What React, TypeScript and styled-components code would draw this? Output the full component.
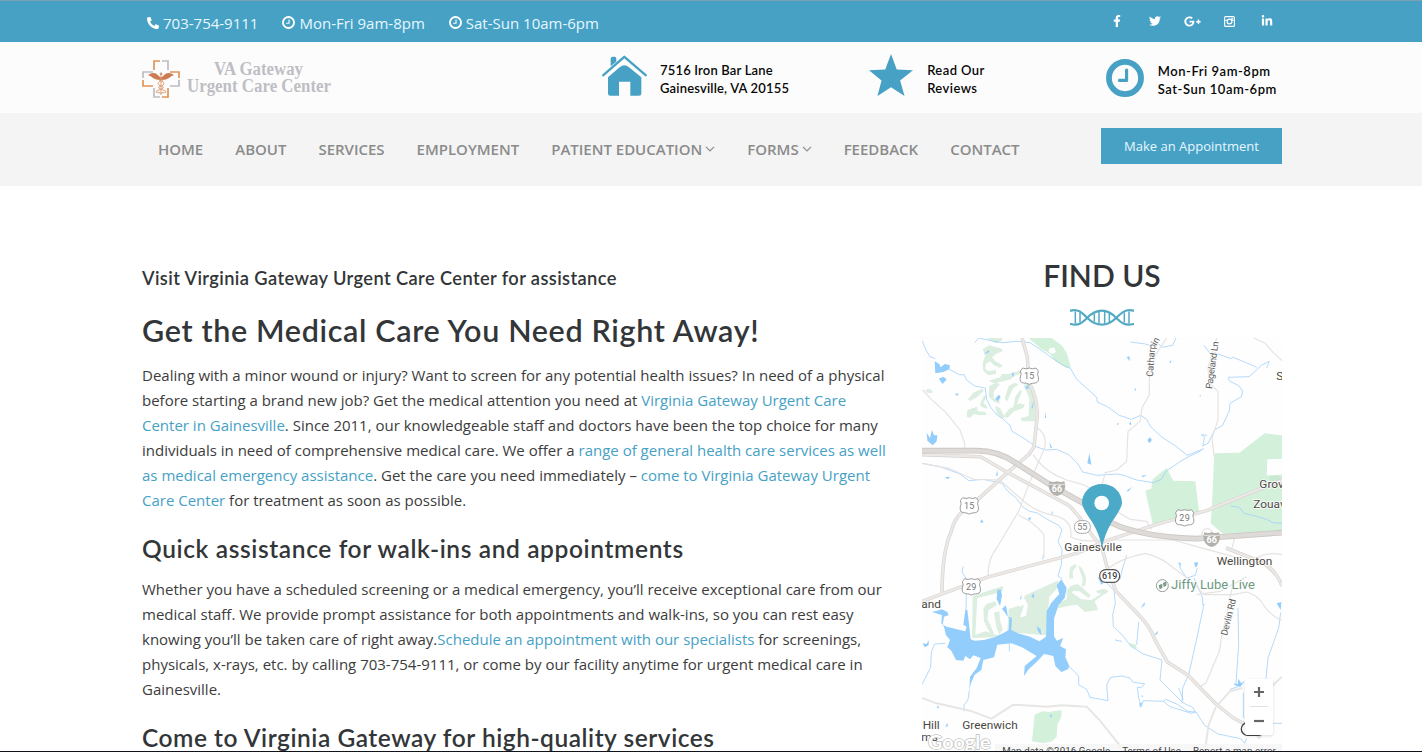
import React from "react";
import styled, { createGlobalStyle } from "styled-components";
import { FaFacebookF, FaTwitter, FaGooglePlusG, FaLinkedinIn, FaPhoneAlt } from "react-icons/fa";

const BLUE = "#46a1c5";
const LATO = `Lato, "Open Sans", sans-serif`;

const GlobalStyle = createGlobalStyle`
  * { box-sizing: border-box; }
  body { margin: 0; background: #fff; font-family: "Open Sans", sans-serif; overflow: hidden; }
  h1, h2, h3, h4, p { margin: 0; }
`;

const Page = styled.div`
  height: 752px;
  overflow: hidden;
  border-bottom: 1px solid #10131a;
`;

const Container = styled.div`
  width: 1140px;
  margin-left: 142px;
  display: flex;
`;

const TopBar = styled.div`
  height: 42px;
  border-top: 1px solid #7ba2b2;
  background: ${BLUE};
  color: #fff;
`;

const TopInfo = styled.div`
  display: flex;
  flex: 1;
  padding-left: 5px;
  gap: 24px;
`;

const TopItem = styled.span`
  display: flex;
  align-items: center;
  gap: 4px;
  height: 43px;
  font-size: 15px;
  color: #e6f8ff;
  white-space: nowrap;
  svg { color: #fff; }
`;

const Social = styled.div`
  display: flex;
  height: 40px;
  align-items: center;
  font-size: 12px;
  margin-right: -4px;
`;

const SocialLink = styled.a`
  width: 37.5px;
  display: flex;
  justify-content: center;
`;

const Brand = styled.div`
  height: 71px;
  background: #fcfcfc;
`;

const Logo = styled.svg`
  width: 192px;
  height: 42px;
  margin-top: 16px;
  flex: none;
  overflow: visible;
`;

const Fact = styled.div<{ $gap: number; $left: number }>`
  display: flex;
  gap: ${(p) => p.$gap}px;
  margin-left: ${(p) => p.$left}px;
  color: #080808;
  svg { flex: none; }
`;

const FactIcon = styled.div<{ $top: number }>`
  padding-top: ${(p) => p.$top}px;
  color: ${BLUE};
  height: 60px;
`;

const FactText = styled.div<{ $spacing: number; $top?: number }>`
  padding-top: ${(p) => p.$top ?? 19}px;
  font: 600 13px/18px ${LATO};
  letter-spacing: ${(p) => p.$spacing}px;
  white-space: nowrap;
`;

const NavBar = styled.div`
  height: 73px;
  background: #f4f4f4;
`;

const Menu = styled.nav`
  display: flex;
  flex: 1;
  padding-left: 16px;
  gap: 32px;
  height: 71px;
  align-items: center;
`;

const MenuItem = styled.a`
  display: flex;
  align-items: center;
  gap: 3px;
  color: #8b8b8b;
  font-weight: 600;
  font-size: 15px;
  line-height: 20px;
  letter-spacing: -0.01px;
  white-space: nowrap;
`;

const Appointment = styled.a`
  width: 181px;
  height: 36px;
  margin-top: 15px;
  background: ${BLUE};
  color: #e6f8ff;
  font-size: 13px;
  line-height: 37px;
  text-align: center;
`;

const Article = styled.main`
  width: 750px;
  padding-top: 78px;
  margin-right: 30px;
  flex: none;
`;

const Heading = styled.h3<{ $size: number; $line: number; $spacing: number; $gap?: number }>`
  margin-top: ${(p) => p.$gap ?? 0}px;
  font: 600 ${(p) => p.$size}px/${(p) => p.$line}px ${LATO};
  letter-spacing: ${(p) => p.$spacing}px;
  color: #333638;
  white-space: nowrap;
`;

const Paragraph = styled.p`
  font-size: 15px;
  line-height: 25px;
  color: #3c3c3c;
  white-space: nowrap;
`;

const Link = styled.a`
  color: ${BLUE};
`;

const Aside = styled.aside`
  width: 360px;
  flex: none;
  display: flex;
  flex-direction: column;
  align-items: center;
  padding-top: 71px;
`;

const HelixSlot = styled.div`
  height: 45px;
  padding-top: 16px;
`;

const MapFrame = styled.div`
  position: relative;
  width: 360px;
  height: 414px;
  overflow: hidden;
`;

const ZoomControls = styled.div`
  position: absolute;
  right: 9px;
  top: 341px;
  width: 28px;
  height: 56px;
  padding: 7px 0 8px;
  background: #fff;
  border-radius: 2px;
  box-shadow: 0 1px 3px rgba(0, 0, 0, 0.14);
  display: flex;
  flex-direction: column;
  align-items: center;
  justify-content: space-between;
`;

const ZoomRule = styled.i`
  width: 18px;
  height: 1px;
  background: #e2e2e2;
`;

const Attribution = styled.div`
  position: absolute;
  right: 0;
  top: 406px;
  height: 14px;
  padding: 0 6px 0 7px;
  display: flex;
  gap: 12px;
  background: rgba(245, 245, 245, 0.8);
  color: #444;
  font: 9.7px/14px Roboto, sans-serif;
  letter-spacing: 0.12px;
  white-space: nowrap;
`;

const ClockOutline = ({ size, weight = 220 }: { size: number; weight?: number }) => (
  <svg width={size} height={size} viewBox="0 0 1536 1536" fill="none" stroke="currentColor">
    <circle cx="768" cy="768" r={766 - weight / 2} strokeWidth={weight} />
    <path d="M832 448v416H544" strokeWidth="128" strokeLinejoin="round" strokeLinecap="round" />
  </svg>
);

const InstagramIcon = () => (
  <svg width="11" height="11" viewBox="0 0 22 22" fill="none" stroke="currentColor">
    <rect x="1.2" y="1.2" width="19.6" height="19.6" rx="2" strokeWidth="2.2" />
    <circle cx="11" cy="11" r="4.8" strokeWidth="2.4" />
    <path d="M1 8.5h5M16 8.5h5" strokeWidth="1.8" />
    <path d="M15 4.5h3v2h-3z" fill="currentColor" />
  </svg>
);

const House = () => (
  <svg width="45" height="42" viewBox="0 0 135 125" fill={BLUE}>
    <path d="M26 33V11q0-6 6-6h6q5 0 5 6v9z" />
    <path d="M4 60 67 5l64 55" fill="none" stroke={BLUE} strokeWidth="7" strokeLinecap="round" strokeLinejoin="round" />
    <path d="M18 66 53 36q14-11 28 0l37 30v49q0 7-7 7H85V80H51v42H25q-7 0-7-7z" />
  </svg>
);

const Star = () => (
  <svg width="44" height="42" viewBox="0 0 130 124" fill={BLUE}>
    <path d="M65 0 82 46l48 2-38 30 13 46-40-26-40 26 12-46L0 48l48-2z" />
  </svg>
);

const Chevron = () => (
  <svg width="10" height="6" viewBox="0 0 10 6" fill="none" stroke="#8b8b8b" strokeWidth="1.2">
    <path d="M1 .8 5 4.8 9 .8" />
  </svg>
);

const Helix = () => (
  <svg width="64" height="17" viewBox="0 0 192 51" fill="none" stroke="#52a9c3" strokeLinecap="round">
    <path d="M2 5C26-1 38 13 52 27S82 47 96 47s28-6 42-20 28-28 52-22" strokeWidth="6.5" />
    <path d="M2 45c24 7 36-5 50-19S82 5 96 5s28 7 42 21 28 26 52 19" strokeWidth="6.5" />
    <path d="M16 9v33M30 13v25M73 16v20M87 10v32M104 10v32M118 14v24M163 13v25M177 9v33" strokeWidth="4.5" />
  </svg>
);

const LogoMark = () => (
  <Logo viewBox="0 0 192 42">
    <g fill="none" strokeWidth="1.7">
      <path stroke="#e09558" d="M18 3H12v9M28 14h9v6M1 22v6h10M26 30v9h-6" />
      <path stroke="#bcbcc2" d="M20 3h6v9M11 14H1v6M37 22v6h-9M12 30v9h6" />
    </g>
    <path fill="#cf7950" d="M18 19 14 15.500Q10 14 6 17q3 1 5 3 3 2 7 2h2q4 0 7-2 2-2 5-3-4-3-8-1.500L20 19z" />
    <circle cx="19" cy="16" r="1.400" fill="#cf9a80" />
    <path fill="none" stroke="#dfa27b" strokeWidth="1" d="M19 17v20M17 22q5 1.500 5 3.500t-4 3 3 3.500-2 3M21 22q-5 1.500-5 3.500t4 3-3 3.500 2 3" />
    <g fill="#bebec4" fontFamily="Liberation Serif, serif" fontWeight="700" fontSize="18">
      <text x="72" y="16.500" textLength="89" lengthAdjust="spacingAndGlyphs">VA Gateway</text>
      <text x="45" y="34" textLength="144" lengthAdjust="spacingAndGlyphs">Urgent Care Center</text>
    </g>
  </Logo>
);

type Shield = { x: number; y: number; label: string };

const UsShield = ({ x, y, label }: Shield) => (
  <g transform={`translate(${x} ${y})`}>
    <path d="M-20-24q10 5 20 0 10 5 20 0l7 9q-5 10 0 18 3 16-9 18-10 0-18 4-8-4-18-4-12-2-9-18 5-8 0-18z" fill="#fff" stroke="#8a8a8a" strokeWidth="2.5" />
    <text y="9" textAnchor="middle" fontSize="27" letterSpacing="1" fill="#777">{label}</text>
  </g>
);

const InterstateShield = ({ x, y, label }: Shield) => (
  <g transform={`translate(${x} ${y})`}>
    <path d="M-22-20q11 4 22 0 11 4 22 0 4 10 2 20-4 20-24 24-20-4-24-24-2-10 2-20z" fill="#b3b1ab" />
    <path d="M-24-11h48" stroke="#fff" strokeWidth="2" />
    <text y="12" textAnchor="middle" fontSize="27" fontWeight="700" fill="#fff">{label}</text>
  </g>
);

const OvalShield = ({ x, y, label, dark }: Shield & { dark?: boolean }) => (
  <g transform={`translate(${x} ${y})`}>
    <rect x={dark ? -30 : -24} y="-19" width={dark ? 60 : 48} height="38" rx="18" fill="#fff" stroke={dark ? "#555" : "#999"} strokeWidth={dark ? 3.5 : 2.5} />
    <text y="9" textAnchor="middle" fontSize="27" fontWeight={dark ? 500 : 400} fill={dark ? "#444" : "#808080"}>{label}</text>
  </g>
);

const Parks = () => (
  <g fill="#d3f0da">
    <path d="M326 0L395 0L425 22L440 45L453 88L440 90L405 68L390 48L360 30Z" />
    <path d="M387 32L402 28L408 42L398 48L386 42Z" fill="#fff" />
    <g fill="#dceee0">
      <path d="M200 0L246 0L246 8L228 16L212 8Z" />
      <path d="M16 156L28 152L38 160L36 166L20 164Z" />
      <path d="M188 34L208 22L246 32L248 40L232 46L216 58L226 70L248 82L240 90L220 80L210 70L198 78L196 92L204 100L228 96L228 108L204 112L190 98L188 76L196 52Z" />
      <path d="M206 128L240 118L246 108L266 108L280 104L292 100L306 98L306 106L286 112L272 124L250 130L222 136Z" />
      <path d="M208 144L228 134L240 138L222 160L220 180L236 186L240 196L224 192L206 176Z" />
      <path d="M144 184L160 164L186 152L192 158L172 176L150 190Z" />
      <path d="M192 172L200 176L190 196L202 204L200 212L184 206L180 198Z" />
      <path d="M142 216L170 206L174 220L196 222L200 230L180 232L162 228L150 240L140 236Z" />
      <path d="M254 182L266 144L284 134L296 140L280 150L270 170L262 190Z" />
      <path d="M280 206L286 176L300 156L306 160L296 184L288 212Z" />
      <path d="M310 140L330 136L334 160L346 190L346 250L306 250L302 240L326 234L328 180Z" />
      <path d="M250 236L266 214L300 196L314 200L310 210L282 220L262 240Z" />
      <path d="M226 204L240 210L254 238L246 242L230 226Z" />
    </g>
    <path d="M883 346L958 344L1034 286L1086 292L1086 362L1042 364L1040 412L1086 410L1086 578L910 588L872 556L876 500Z" />
    <path d="M1048 416L1074 412L1086 420L1086 450L1052 440Z" fill="#c8ead0" />
    <path d="M676 458L694 452L698 424L740 390L760 428L826 430L838 528L698 558Z" />
    <g fill="#dceee0">
      <path d="M158 774L248 744L250 756L236 764L172 780L166 890L196 880L232 892L262 884L266 812L290 806L316 772L412 728L420 742L388 776L378 892L330 888L290 884L240 898L156 900Z" />
      <path d="M190 812L200 798L226 790L230 802L206 816L202 844L216 872L224 892L210 886L192 850ZM222 824L238 820L240 846L248 874L238 890L230 870Z" />
      <path d="M448 710L450 688L466 678L470 684L458 700L460 720L448 722ZM474 682L486 690L498 718L496 742L486 748L488 722Z" />
      <path d="M440 758L452 744L472 738L488 750L512 772L506 780L478 760L460 758L456 764L484 784L514 786L562 756L558 764L524 790L534 816L494 822L472 800L444 804L408 812L414 794L440 784Z" />
      <path d="M528 758L552 752L566 760L556 768L532 766Z" />
    </g>
    <path d="M284 780L296 806L312 802L300 838L318 834L324 800L312 780L298 772Z" fill="#fefefe" />
    <path d="M344 1130L368 1120L386 1122L424 1116L424 1136L412 1160L410 1196L396 1210L370 1216L336 1210Z" />
    <path d="M626 914L648 920L650 932L634 926Z" />
  </g>
);

const Water = () => (
  <g fill="#93cdfb">
    <path d="M44 70L58 78L62 88L74 78L90 82L88 94L70 102L46 106ZM56 122L70 116L80 124L68 138ZM104 168L116 166L112 174ZM620 58L628 54L630 70ZM226 182L236 170L242 176L234 190ZM274 108L280 102L282 118ZM643 154L647 150L648 160ZM748 72L754 66L752 76ZM190 50L206 36L208 42ZM314 150L328 138L324 154ZM334 210L342 186L338 212ZM838 172L842 170L842 176ZM374 240L378 222L378 240Z" />
    <path d="M20 284L30 300L36 276L42 292L52 292L50 310L38 322L22 308ZM502 376L508 346L514 380ZM682 306L690 298L696 306L688 316ZM74 418L90 416L84 424ZM388 312L396 328L392 332ZM627 258L632 250L634 262ZM664 414L680 410L670 418ZM618 460L636 446L626 460ZM228 414L231 398L234 412ZM180 552L186 544L190 556ZM324 540L334 538L328 548ZM775 674L782 674L782 690ZM822 674L834 672L832 684L826 688ZM394 526L398 518L398 530ZM590 258L596 254L594 262Z" />
    <path d="M36 822L52 818L66 814L82 822L86 832L72 836L68 860L80 866L136 880L140 866L130 860L136 816L142 816L148 866L152 904L164 908L192 906L224 898L252 884L266 876L268 842L246 812L258 802L264 836L276 840L274 876L294 886L330 896L358 910L378 896L380 820L394 794L418 768L410 742L424 724L440 750L434 780L416 800L402 842L402 894L410 908L430 900L420 924L438 934L436 958L448 984L444 994L424 1002L406 984L400 954L372 948L352 970L326 994L312 1014L314 984L350 954L306 928L274 916L232 920L222 958L190 966L184 996L164 1010L152 1038L148 1060L150 1016L170 990L182 960L160 952L150 964L136 954L130 968L108 966L94 938L82 928L90 906L78 892L72 866L64 856L66 832Z" />
    <path d="M232 756L242 754L246 772L240 804L230 784ZM350 864L362 874L364 892L354 880ZM8 916L20 918L26 906L26 922L14 928ZM300 784L304 768L304 784ZM334 776L342 764L342 780ZM662 810L674 792L674 802ZM702 892L714 878L712 888ZM1070 796L1084 792L1082 816ZM942 1036L954 1038L954 1022L964 1036L974 1028L962 1046L944 1042ZM76 1164L84 1154L82 1168ZM50 1108L56 1102L56 1112ZM388 1130L396 1130L394 1140ZM532 714L550 736L544 740ZM664 1072L670 1074L666 1078ZM658 1096L666 1094L660 1110Z" />
  </g>
);

const Streams = () => (
  <g fill="none" stroke="#9dcffa" strokeWidth="2.3" strokeLinejoin="round">
    <path d="M6 8L18 36L30 56L46 62M88 94L118 110L132 110L140 126L164 144L196 150L200 184L212 208L230 230L248 242L270 262L276 280L310 300L348 326L378 336L410 334L446 350L474 378L488 402L530 412L590 408L612 412L650 426L700 434L724 424L738 400L778 372L806 356L844 338M164 14L176 0M176 0L222 10L246 14L290 10L330 14L360 34L396 60L426 80L452 92L470 124L504 154L530 178L532 192L562 206L598 232L634 244L662 232L680 244L690 264L726 298L764 322L802 352L852 332" />
    <path d="M632 12L676 18L690 22L698 18L710 12L726 28L758 22L768 0M884 44L932 62L940 58L1002 84L1010 88M924 118L988 116L1024 82L1048 70L1040 90M924 120L930 130L958 144L968 160L964 176L930 196L928 218L908 262L884 276L864 316L848 324L854 298L844 290L862 292M852 22L868 44L884 48" />
    <path d="M6 376L60 386L120 408L146 428L190 424L228 432L246 436L262 458L286 478L310 508L328 520L350 524L382 544L416 562L426 576L414 610L426 634L424 680L414 714L426 722M130 686L126 702L140 724L138 816M370 650L368 664M620 652L608 690L600 724M778 686L800 720L826 712L832 690M822 720L848 780L848 800L852 798L828 912L806 1010L788 1050L786 1096M932 504L958 508L972 526L1006 534L1040 544L1058 554L1086 556" />
    <path d="M76 916L44 918L34 942L32 988L6 1040M148 1058L144 1084L132 1102L132 1120M446 984L476 1014L476 1040L500 1054L510 1078L564 1088L560 1040L572 1018L606 1014L630 1020L638 1032L674 1038L664 1048L652 1048L656 1080L664 1106L670 1088L730 1090L738 1084L770 1098L804 1120L826 1122L818 1108L796 1098L784 1090L720 1026L726 966L670 948L632 924L608 892L580 866L578 830L586 796L582 758L552 726M656 852L650 920M730 1090L750 1106L814 1126L828 1122L854 1162L894 1188L962 1202L974 1216L980 1200M954 810L956 920L948 1036M1082 824L1076 870L1044 960L1038 1022M960 1044L930 1054M776 1050L790 1086M970 1064L970 1140M1056 1156L1086 1156M585 906L606 910M268 910L268 940" />
  </g>
);

const thinRoads = [
  "M740 0L706 52L688 108L688 170L666 210L660 250L624 280L620 370L590 396L556 404L546 440",
  "M890 0L864 90L868 136L894 160L894 246L876 300L882 354",
  "M1000 0L1036 16L1060 44L1086 68",
  "M8 156L34 184L78 224L120 276L134 316V340",
  "M352 270Q382 288 374 330L330 430L296 520L230 630Q204 660 204 716",
  "M340 350Q370 400 440 426L490 440L520 456M590 520L630 544L680 550L694 574",
  "M296 532Q344 554 372 590V660",
  "M6 376L90 392L160 424L240 426L300 480Q340 520 400 532T452 596Q480 614 560 606L760 606L860 634L1030 680L1086 730",
  "M566 690Q606 660 676 646Q730 660 760 690L816 730L852 770L940 770L980 762Q1014 770 1034 806Q1054 834 1086 848",
  "M1004 664Q1040 640 1086 650M944 600L936 630M830 770L900 760L980 716",
  "M940 734L904 900L898 940L858 1034L838 1048",
];

const roads = [
  "M306 0L322 56L326 130Q352 180 352 230L342 326L326 350L262 404L150 506Q104 530 94 580Q66 640 66 770",
  "M6 350L182 356L264 404L446 502Q474 528 500 570L546 630L562 690L588 760L656 830Q690 864 706 908L742 972L804 1012L888 1098L940 1140L996 1170L1020 1200",
  "M6 790L200 718L470 646L560 608L720 556L860 518L1086 426",
  "M918 630L1030 674Q1066 694 1086 744",
];

const interstate = "M6 338H170Q234 338 286 374L390 440L490 496Q540 542 600 566Q690 598 830 602L1086 584";

const Roads = () => (
  <g fill="none" strokeLinejoin="round">
    <g stroke="#e5e3e2" strokeWidth="3.5">
      {thinRoads.map((d) => <path key={d} d={d} />)}
    </g>
    <g stroke="#e8e6e5" strokeWidth="6">
      <path d="M6 1080L50 1096L150 1118L214 1142L280 1100L380 1106L426 1102L500 1106L540 1148L602 1226M894 1100L930 1060L968 1050M888 1106L866 1160L856 1230M1086 1016L1050 1050" />
    </g>
    <g stroke="#d6d2d0" strokeWidth="10.500">{roads.map((d) => <path key={d} d={d} />)}</g>
    <g stroke="#ebe8e6" strokeWidth="7">{roads.map((d) => <path key={d} d={d} />)}</g>
    <path d={interstate} stroke="#cbc7c4" strokeWidth="17" />
    <path d={interstate} stroke="#dedad8" strokeWidth="12" />
    <circle cx="862" cy="588" r="16" stroke="#e0dddb" strokeWidth="3" />
  </g>
);

const AreaMap = () => (
  <svg width="360" height="414" viewBox="6 0 1080 1242" fontFamily="Roboto, sans-serif">
    <rect x="6" width="1080" height="1242" fill="#fefefe" />
    <Parks />
    <Streams />
    <Water />
    <Roads />
    <UsShield x={328} y={114} label="15" />
    <UsShield x={148} y={503} label="15" />
    <UsShield x={794} y={539} label="29" />
    <UsShield x={154} y={746} label="29" />
    <InterstateShield x={411} y={450} label="66" />
    <InterstateShield x={875} y={603} label="66" />
    <OvalShield x={487} y={567} label="55" />
    <OvalShield x={569} y={714} label="619" dark />
    <rect x="964" y="1154" width="70" height="38" rx="19" fill="#fff" stroke="#444" strokeWidth="4" />
    <g fontSize="28" fill="#5c5c5c" stroke="#fff" strokeWidth="4" paintOrder="stroke">
      <text transform="translate(698 117) rotate(-85)">Catharp</text>
      <text transform="translate(709 24) rotate(-62)">in R</text>
      <text transform="translate(876 154) rotate(-82)" textLength="144">Pageland Ln</text>
      <text transform="translate(921 894) rotate(-76)" textLength="112">Devlin Rd</text>
    </g>
    <g fontSize="35.500" fill="#4a4642" stroke="#fff" strokeWidth="4" paintOrder="stroke">
      <text x="433" y="640" textLength="172">Gainesville</text>
      <text x="890" y="682" textLength="167">Wellington</text>
      <text x="1018" y="450">Grove</text>
      <text x="1000" y="510">Zouave</text>
      <text x="1069" y="126">Sudley</text>
      <text x="4" y="810">and</text>
      <text x="8" y="1173">Hill</text>
      <text x="4" y="1208">ms</text>
      <text x="127" y="1173" textLength="166">Greenwich</text>
      <text x="753" y="754" fontSize="39" fill="#6b9980" textLength="252">Jiffy Lube Live</text>
    </g>
    <circle cx="727" cy="743" r="18" fill="#fff" stroke="#888" strokeWidth="2.5" />
    <path d="M716 742l11-5v13l-8 4zM729 735l10-5v13l-8 4z" fill="#789b86" />
    <path d="M546 630q-6-38-29-77-31-44-31-58c0-33 26-57 60-57s60 24 60 57q0 14-31 58-23 40-29 77z" fill="#4baac8" />
    <circle cx="545" cy="495" r="22" fill="#fff" />
    <text x="24" y="1234" fontSize="54" fontWeight="700" fill="#fff" stroke="#bdbdbd" strokeWidth="4" paintOrder="stroke" textLength="188" lengthAdjust="spacingAndGlyphs" fontFamily="Lato, sans-serif">Google</text>
  </svg>
);

export default function App() {
  return (
    <Page>
      <GlobalStyle />
      <TopBar>
        <Container>
          <TopInfo>
            <TopItem><FaPhoneAlt size={12} />703-754-9111</TopItem>
            <TopItem><ClockOutline size={13} />Mon-Fri 9am-8pm</TopItem>
            <TopItem><ClockOutline size={13} />Sat-Sun 10am-6pm</TopItem>
          </TopInfo>
          <Social>
            <SocialLink><FaFacebookF /></SocialLink>
            <SocialLink><FaTwitter /></SocialLink>
            <SocialLink><FaGooglePlusG size={17} /></SocialLink>
            <SocialLink><InstagramIcon /></SocialLink>
            <SocialLink><FaLinkedinIn /></SocialLink>
          </Social>
        </Container>
      </TopBar>
      <Brand>
        <Container>
          <LogoMark />
          <Fact $left={268} $gap={13}>
            <FactIcon $top={13}><House /></FactIcon>
            <FactText $spacing={0.17}>7516 Iron Bar Lane<br />Gainesville, VA 20155</FactText>
          </Fact>
          <Fact $left={80} $gap={14}>
            <FactIcon $top={12}><Star /></FactIcon>
            <FactText $spacing={0.42}>Read Our<br />Reviews</FactText>
          </Fact>
          <Fact $left={121} $gap={14}>
            <FactIcon $top={17}><ClockOutline size={38} weight={235} /></FactIcon>
            <FactText $spacing={0.52} $top={20}>Mon-Fri 9am-8pm<br />Sat-Sun 10am-6pm</FactText>
          </Fact>
        </Container>
      </Brand>
      <NavBar>
        <Container>
          <Menu>
            <MenuItem>HOME</MenuItem>
            <MenuItem>ABOUT</MenuItem>
            <MenuItem>SERVICES</MenuItem>
            <MenuItem>EMPLOYMENT</MenuItem>
            <MenuItem>PATIENT EDUCATION<Chevron /></MenuItem>
            <MenuItem>FORMS<Chevron /></MenuItem>
            <MenuItem>FEEDBACK</MenuItem>
            <MenuItem>CONTACT</MenuItem>
          </Menu>
          <Appointment>Make an Appointment</Appointment>
        </Container>
      </NavBar>
      <Container>
        <Article>
          <Heading as="h4" $size={18.3} $line={28} $spacing={0.39}>Visit Virginia Gateway Urgent Care Center for assistance</Heading>
          <Heading as="h1" $size={30.5} $line={65} $gap={6} $spacing={0.65}>Get the Medical Care You Need Right Away!</Heading>
          <Paragraph>
            Dealing with a minor wound or injury? Want to screen for any potential health issues? In need of a physical<br />
            before starting a brand new job? Get the medical attention you need at <Link>Virginia Gateway Urgent Care<br />
            Center in Gainesville</Link>. Since 2011, our knowledgeable staff and doctors have been the top choice for many<br />
            individuals in need of comprehensive medical care. We offer a <Link>range of general health care services as well<br />
            as medical emergency assistance</Link>. Get the care you need immediately – <Link>come to Virginia Gateway Urgent<br />
            Care Center</Link> for treatment as soon as possible.
          </Paragraph>
          <Heading $size={24.5} $line={56} $gap={8} $spacing={0.62}>Quick assistance for walk-ins and appointments</Heading>
          <Paragraph>
            Whether you have a scheduled screening or a medical emergency, you’ll receive exceptional care from our<br />
            medical staff. We provide prompt assistance for both appointments and walk-ins, so you can rest easy<br />
            knowing you’ll be taken care of right away.<Link>Schedule an appointment with our specialists</Link> for screenings,<br />
            physicals, x-rays, etc. by calling 703-754-9111, or come by our facility anytime for urgent medical care in<br />
            Gainesville.
          </Paragraph>
          <Heading $size={24.5} $line={56} $gap={8} $spacing={0.53}>Come to Virginia Gateway for high-quality services</Heading>
        </Article>
        <Aside>
          <Heading as="h2" $size={30} $line={36} $spacing={0}>FIND US</Heading>
          <HelixSlot><Helix /></HelixSlot>
          <MapFrame>
            <AreaMap />
            <ZoomControls>
              <svg width="12" height="12" viewBox="0 0 12 12" stroke="#666" strokeWidth="2.2"><path d="M1 6h10M6 1v10" /></svg>
              <ZoomRule />
              <svg width="12" height="12" viewBox="0 0 12 12" stroke="#666" strokeWidth="2.2"><path d="M1 6h10" /></svg>
            </ZoomControls>
            <Attribution><span>Map data ©2016 Google</span><span>Terms of Use</span><span>Report a map error</span></Attribution>
          </MapFrame>
        </Aside>
      </Container>
    </Page>
  );
}
